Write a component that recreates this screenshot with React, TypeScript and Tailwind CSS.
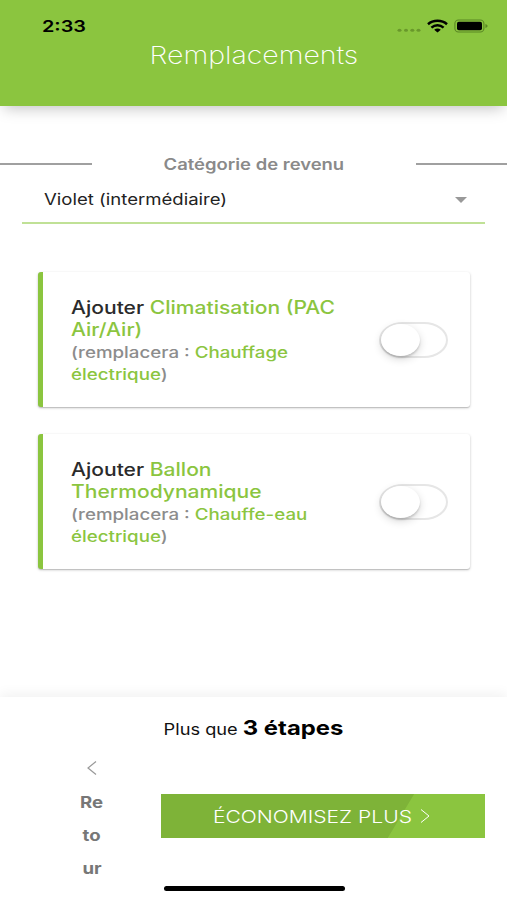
import type { ReactNode } from "react";

type Swap = {
  lead: string;
  rest: string;
  replaced: string;
};

const SWAPS: Swap[] = [
  { lead: "Climatisation (PAC", rest: "Air/Air)", replaced: "Chauffage" },
  { lead: "Ballon", rest: "Thermodynamique", replaced: "Chauffe-eau" },
];

function StatusBar() {
  return (
    <div className="flex h-9 items-start justify-between pt-[16px] pr-[19px] pl-[42px]">
      <span className="origin-left scale-x-[1.24] text-[16px] leading-[21px] font-semibold text-black">2:33</span>
      <div className="flex items-center pt-[3px]">
        <svg width="24" height="14" viewBox="0 0 24 14" fill="#69982b" aria-hidden>
          <ellipse cx="2.5" cy="11.3" rx="2" ry="1.5" />
          <ellipse cx="9" cy="11.3" rx="2" ry="1.5" />
          <ellipse cx="15.3" cy="11.3" rx="2" ry="1.5" />
          <ellipse cx="21.5" cy="11.3" rx="2" ry="1.5" />
        </svg>
        <svg className="ml-[6px]" width="21" height="14" viewBox="0 0 21 14" fill="none" stroke="#000" strokeWidth="2.5" aria-hidden>
          <path d="M1 5.2C6.2.6 14.8.6 20 5.2" />
          <path d="M4.4 8.6c3.6-3.1 8.6-3.1 12.2 0" />
          <path d="M7.2 10.8c2-1.7 4.6-1.7 6.6 0l-3.300 2.600z" fill="#000" stroke="none" />
        </svg>
        <svg className="ml-[6px]" width="34" height="14" viewBox="0 0 34 14" aria-hidden>
          <rect x="0.9" y="1" width="29" height="12" rx="3.6" fill="none" stroke="#5a8724" strokeWidth="1.1" />
          <rect x="3" y="2.8" width="25" height="8.4" rx="1.8" fill="#000" />
          <path d="M31.4 5v4c1.6-.5 2.2-1.2 2.2-2s-.6-1.5-2.2-2z" fill="#5a8724" />
        </svg>
      </div>
    </div>
  );
}

function Line({ children }: { children: ReactNode }) {
  return <span className="block w-max origin-left scale-x-[1.17] whitespace-nowrap">{children}</span>;
}

function SmallLine({ children }: { children: ReactNode }) {
  return <span className="block w-max origin-left scale-x-[1.208] whitespace-nowrap">{children}</span>;
}

function Toggle() {
  return (
    <button type="button" role="switch" aria-checked="false" className="relative h-[36px] w-[69px]">
      <span className="absolute inset-0 rounded-[24px/18px] border-2 border-[#e6e6e6] bg-white" />
      <span className="absolute top-[2px] left-[2px] h-[32px] w-[39px] rounded-[50%] bg-white shadow-[0_3px_8px_rgba(0,0,0,0.16),0_2px_2px_rgba(0,0,0,0.14)]" />
    </button>
  );
}

function SwapCard({ swap }: { swap: Swap }) {
  return (
    <article className="flex h-[135px] items-center justify-between rounded-[3px] border-l-[5px] border-[#8bc53f] bg-white pr-[22px] pl-[28px] shadow-[0_1px_3px_rgba(0,0,0,0.2),0_1px_1px_rgba(0,0,0,0.14)]">
      <div className="pt-[3px] text-[15.5px] leading-[22px] font-medium text-[#8c8c8c]">
        <div className="mb-px text-[18px] text-[#8bc53f]">
          <Line>
            <span className="text-[#2b2b2b]">Ajouter</span> {swap.lead}
          </Line>
          <Line>{swap.rest}</Line>
        </div>
        <SmallLine>
          (remplacera : <span className="text-[#8bc53f]">{swap.replaced}</span>
        </SmallLine>
        <SmallLine>
          <span className="text-[#8bc53f]">électrique</span>)
        </SmallLine>
      </div>
      <Toggle />
    </article>
  );
}

export default function App() {
  return (
    <div className="flex h-[900px] w-[507px] flex-col overflow-hidden bg-white font-['Inter',sans-serif]">
      <header className="h-[106px] shrink-0 bg-[#8bc53f] shadow-[0_6px_14px_-4px_rgba(0,0,0,0.25)]">
        <StatusBar />
        <h1 className="text-center text-[24.8px] leading-[38px] font-extralight text-white">
          <span className="inline-block scale-x-[1.148]">Remplacements</span>
        </h1>
      </header>

      <main className="flex-1">
        <div className="mt-[47px] flex h-[22px] items-center justify-between">
          <span className="h-[1.5px] w-[92px] bg-[#a0a0a0]" />
          <h2 className="scale-x-[1.19] pt-px text-[15.5px] font-semibold text-[#8a8a8a]">Catégorie de revenu</h2>
          <span className="h-[1.5px] w-[91px] bg-[#a0a0a0]" />
        </div>
        <div className="mx-[22px] flex h-[49px] items-center justify-between border-b-2 border-[#c0e196] pr-[18px] pl-[22px]">
          <span className="origin-left scale-x-[1.197] pt-[2px] text-[15.5px] text-[#222]">Violet (intermédiaire)</span>
          <svg className="mt-[2px]" width="12" height="6" viewBox="0 0 12 6" fill="#999" aria-hidden>
            <path d="M0 0h12L6 6z" />
          </svg>
        </div>
        <div className="mt-[48px] mr-[37px] ml-[38px] flex flex-col gap-[27px]">
          {SWAPS.map((swap) => (
            <SwapCard key={swap.lead} swap={swap} />
          ))}
        </div>
      </main>

      <footer className="relative h-[203px] shrink-0 bg-white shadow-[0_-3px_12px_rgba(0,0,0,0.06)]">
        <p className="flex h-[62px] items-center justify-center pt-px text-[15.5px] text-[#111]">
          <span className="scale-x-[1.175] whitespace-nowrap">
            Plus que <strong className="text-[20.3px] font-bold text-black">3 étapes</strong>
          </span>
        </p>
        <div className="flex">
          <button type="button" className="ml-[80px] flex w-[24px] flex-col items-center text-[15.5px] leading-[33px] font-bold text-[#777]">
            <svg className="mt-[2px] mb-[11px]" width="10" height="14" viewBox="0 0 10 14" fill="none" stroke="#999" strokeWidth="1.2" aria-hidden>
              <path d="M9 .5 1 7l8 6.5" />
            </svg>
            <span className="scale-x-[1.2]">Re</span>
            <span className="scale-x-[1.2]">to</span>
            <span className="scale-x-[1.2]">ur</span>
          </button>
          <button
            type="button"
            className="mt-[35px] ml-[57px] flex h-[44px] w-[324px] items-center bg-[linear-gradient(121deg,#7eb338_0,#7eb338_72.1%,#8bc53f_72.4%)] pl-[52px] text-[17.7px] font-light text-white"
          >
            <span className="origin-left scale-x-[1.19] pt-[2px] whitespace-nowrap">ÉCONOMISEZ PLUS</span>
            <svg className="ml-[40px]" width="10" height="14" viewBox="0 0 10 14" fill="none" stroke="#fff" strokeWidth="1" aria-hidden>
              <path d="m1 .5 8 6.5-8 6.5" />
            </svg>
          </button>
        </div>
        <div className="absolute bottom-[9px] left-[164px] h-[5.5px] w-[181px] rounded-full bg-black" />
      </footer>
    </div>
  );
}
